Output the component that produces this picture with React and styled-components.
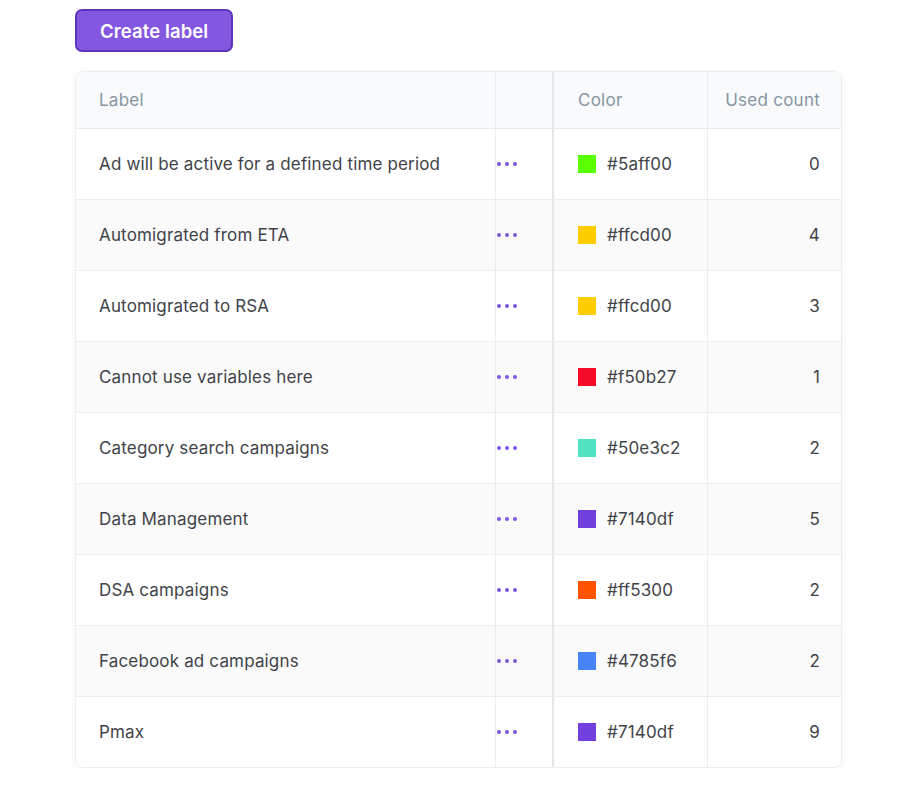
import React from 'react'
import styled, { createGlobalStyle } from 'styled-components'

const GlobalStyle = createGlobalStyle`
  *, *::before, *::after {
    box-sizing: border-box;
  }
  body {
    margin: 0;
    background: #fff;
    font-family: Inter, "Noto Sans", sans-serif;
  }
`

const Page = styled.div`
  padding: 9px 0 0 75px;
  display: flex;
  flex-direction: column;
  align-items: flex-start;
  gap: 19px;
`

const CreateButton = styled.button`
  height: 43px;
  padding: 0 23px;
  background: #8457e1;
  border: 2px solid #5c36b8;
  border-radius: 7px;
  color: #fff;
  font-family: Inter, sans-serif;
  font-size: 18.5px;
  font-weight: 600;
  letter-spacing: 0.1px;
  cursor: pointer;
`

const Table = styled.div`
  width: 767px;
  display: grid;
  grid-template-columns: 419px 59px 153px 1fr;
  border: 1px solid #ededed;
  border-radius: 8px;
  overflow: hidden;
  box-shadow: 0 2px 8px rgba(0, 0, 0, 0.05);
`

const Row = styled.div`
  display: contents;
`

const HeadCell = styled.div`
  height: 57px;
  display: flex;
  align-items: center;
  justify-content: ${p => (p.$right ? 'flex-end' : 'flex-start')};
  padding: ${p => (p.$right ? '0 21px 1px 0' : p.$color ? '0 0 1px 24px' : '0 0 1px 23px')};
  background: #f8fafb;
  border-bottom: 1px solid #e8eaec;
  border-left: ${p => (p.$sep ? '1px solid #eceef0' : 'none')};
  border-right: ${p => (p.$sticky ? '2px solid #e6e7e9' : 'none')};
  color: #8795a3;
  font-size: 17px;
  font-weight: 400;
  letter-spacing: 0.25px;
`

const Cell = styled.div`
  height: ${p => (p.$last ? '70px' : '71px')};
  display: flex;
  align-items: center;
  justify-content: ${p => (p.$right ? 'flex-end' : 'flex-start')};
  padding: ${p =>
    p.$right ? '0 21px 1px 0' : p.$tight ? '0 0 1px 1px' : p.$color ? '0 0 1px 24px' : '0 0 1px 23px'};
  gap: 11px;
  background: ${p => (p.$striped ? '#fafafa' : '#fff')};
  border-bottom: ${p => (p.$last ? 'none' : '1px solid #ececec')};
  border-left: ${p => (p.$sep ? '1px solid #ededed' : 'none')};
  border-right: ${p => (p.$sticky ? '2px solid #e6e6e6' : 'none')};
  color: #414349;
  font-size: 17px;
  letter-spacing: 0.16px;
`

const Dots = styled.div`
  display: flex;
  gap: 4px;
  cursor: pointer;

  span {
    width: 4px;
    height: 4px;
    border-radius: 50%;
    background: #7b55dc;
  }
`

const Swatch = styled.span`
  width: 18px;
  height: 18px;
  background: ${p => p.$color};
  flex-shrink: 0;
`

const labels = [
  { name: 'Ad will be active for a defined time period', color: '#5aff00', count: 0 },
  { name: 'Automigrated from ETA', color: '#ffcd00', count: 4 },
  { name: 'Automigrated to RSA', color: '#ffcd00', count: 3 },
  { name: 'Cannot use variables here', color: '#f50b27', count: 1 },
  { name: 'Category search campaigns', color: '#50e3c2', count: 2 },
  { name: 'Data Management', color: '#7140df', count: 5 },
  { name: 'DSA campaigns', color: '#ff5300', count: 2 },
  { name: 'Facebook ad campaigns', color: '#4785f6', count: 2 },
  { name: 'Pmax', color: '#7140df', count: 9 },
]

export default function App() {
  return (
    <>
      <GlobalStyle />
      <Page>
        <CreateButton>Create label</CreateButton>
        <Table>
          <Row>
            <HeadCell>Label</HeadCell>
            <HeadCell $sep $sticky />
            <HeadCell $color>Color</HeadCell>
            <HeadCell $sep $right>Used count</HeadCell>
          </Row>
          {labels.map((l, i) => {
            const striped = i % 2 === 1
            const last = i === labels.length - 1
            return (
              <Row key={l.name}>
                <Cell $striped={striped} $last={last}>{l.name}</Cell>
                <Cell $striped={striped} $last={last} $sep $sticky $tight>
                  <Dots><span /><span /><span /></Dots>
                </Cell>
                <Cell $striped={striped} $last={last} $color>
                  <Swatch $color={l.color} />
                  {l.color}
                </Cell>
                <Cell $striped={striped} $last={last} $sep $right>{l.count}</Cell>
              </Row>
            )
          })}
        </Table>
      </Page>
    </>
  )
}
